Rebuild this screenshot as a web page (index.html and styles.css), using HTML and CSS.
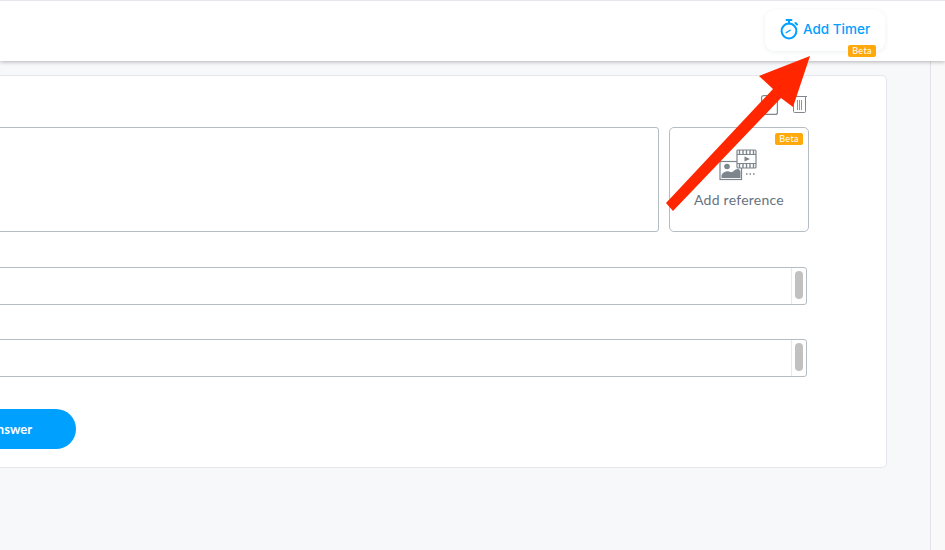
FILE: index.html
```html
<!DOCTYPE html>
<html lang="en">
<head>
<meta charset="utf-8">
<title>Add Timer</title>
<link rel="stylesheet" href="styles.css">
</head>
<body>
<div class="page">
  <header class="topbar">
    <button class="timer-btn" type="button">
      <svg class="timer-icon" width="19" height="22" viewBox="0 0 19 22" fill="none" stroke="#00a0ff" stroke-width="2" stroke-linecap="round">
        <circle cx="9" cy="13" r="7.400"/>
        <path d="M6.500 2h5M9 2v3.500M15.500 5l1.500 1.500" />
        <path d="M6.200 14.600l4-2.400" stroke-width="1.300"/>
      </svg>
      <span class="timer-label">Add Timer</span>
      <span class="badge badge-timer">Beta</span>
    </button>
  </header>
  <div class="body-row">
    <main class="content">
      <section class="card">
        <div class="tools">
          <svg width="17" height="20" viewBox="0 0 17 20" fill="none" stroke="#7f8790" stroke-width="1.200"><rect x="0.600" y="0.600" width="15.800" height="18.800" rx="2"/></svg>
          <svg width="15" height="18" viewBox="0 0 15 18" fill="none" stroke="#7f8790" stroke-width="1"><path d="M0 1.500h15M1.500 2v14.500a1 1 0 0 0 1 1h10a1 1 0 0 0 1-1V2"/><path d="M5.500 5v10M7.500 5v10M9.500 5v10" stroke="#8f969d"/></svg>
        </div>
        <div class="question-row">
          <div class="question-box"></div>
          <div class="reference">
            <span class="badge badge-ref">Beta</span>
            <svg class="ref-icon" width="38" height="32" viewBox="0 0 38 32" fill="none" stroke="#7d858d">
              <rect x="1" y="12.500" width="21.500" height="18" fill="#fff" stroke-width="1.200"/>
              <circle cx="8" cy="17.500" r="2.800" fill="#7d858d" stroke="none"/>
              <path d="M2.500 29v-3c2-3.500 6-4.500 9-3 2.500 1 4-3 7-3 2 0 3 2 3 3v6z" fill="#7d858d" stroke="none"/>
              <rect x="18" y="1" width="19" height="18" rx="1" fill="#fff" stroke-width="1.200"/>
              <path d="M18 5.500h19M18 14.500h19" stroke-width="1.200"/>
              <path d="M20.500 1v4.500M24 1v4.500M27.500 1v4.500M31 1v4.500M34.500 1v4.500M20.500 14.500V19M24 14.500V19M27.500 14.500V19M31 14.500V19M34.500 14.500V19" stroke-width="1.400"/>
              <path d="M25.500 7.500l5.500 2.500-5.500 2.500z" fill="#7d858d" stroke="none"/>
              <path d="M27 25h1.500M30.500 25H32M34 25h1.500" stroke-width="1.500"/>
            </svg>
            <span class="ref-label">Add reference</span>
          </div>
        </div>
        <div class="answer-box"><div class="answer-field"></div><div class="scroll"><div class="thumb"></div></div></div>
        <div class="answer-box"><div class="answer-field"></div><div class="scroll"><div class="thumb"></div></div></div>
        <button class="add-answer" type="button">Add Answer</button>
      </section>
    </main>
    <aside class="side-strip"></aside>
  </div>
  <svg class="arrow" width="945" height="550" viewBox="0 0 945 550">
    <polygon fill="#ff2600" points="810,56 759,76 773,89 666,203 673,211 781,98 793,107"/>
  </svg>
</div>
</body>
</html>
```
FILE: styles.css
```css
* { box-sizing: border-box; }
html, body { margin: 0; padding: 0; }
body { font-family: "Lato", "Open Sans", sans-serif; background: #f7f8fa; }
.page { position: relative; width: 945px; height: 550px; overflow: hidden; display: flex; flex-direction: column; }
.topbar {
  position: relative; z-index: 2; height: 61px; flex: none; background: #fff;
  border-top: 1px solid #e4e7ec; box-shadow: 0 1px 4px rgba(0,0,0,.28);
  display: flex; justify-content: flex-end; align-items: flex-start; padding: 9px 60px 0 0;
}
.timer-btn {
  position: relative; width: 120px; height: 41px; border: 0; border-radius: 9px; background: #fff;
  box-shadow: 0 1px 5px rgba(30,50,80,.08); display: flex; align-items: center; gap: 4px;
  padding: 0 0 2px 15px; color: #00a0ff; font: 500 13.500px "Inter", sans-serif; cursor: pointer;
}
.timer-icon { flex: none; margin-bottom: 1px; }
.timer-label { margin-bottom: 2px; }
.badge { position: absolute; background: #ffa90a; color: #fff; font: 400 9px/12px "Lato", sans-serif; text-align: center; border-radius: 2px; letter-spacing: .3px; }
.badge-timer { left: 83px; top: 35px; width: 28px; height: 12px; }
.badge-ref { right: 5px; top: 5px; width: 28px; height: 12px; }
.body-row { flex: 1; display: flex; min-height: 0; }
.content { flex: 1; min-width: 0; padding: 14px 43px 0 0; }
.side-strip { width: 15px; flex: none; background: #f9f9f9; border-left: 1px solid #e2e3e6; }
.card {
  margin-left: -100px; height: 393px; background: #fff; border: 1px solid #e4e7ec; border-radius: 5px;
  padding: 19px 77px 0 0; display: flex; flex-direction: column;
}
.tools { height: 32px; display: flex; justify-content: flex-end; align-items: flex-start; gap: 14px; padding-right: 2px; }
.question-row { display: flex; gap: 10px; height: 105px; margin-bottom: 35px; }
.question-box { flex: 1; border: 1px solid #b4bcc4; border-radius: 3px; }
.reference {
  position: relative; width: 140px; flex: none; border: 1px solid #b4bcc4; border-radius: 5px;
  display: flex; flex-direction: column; align-items: center; padding-top: 21px;
}
.ref-icon { margin-left: -3px; }
.ref-label { margin-top: 10px; font-size: 14px; line-height: 18px; color: #66737f; letter-spacing: .25px; }
.answer-box {
  height: 38px; margin: 0 2px 34px 0; display: flex; border: 1px solid #b4bcc4; border-radius: 3px; flex: none;
}
.answer-field { flex: 1; }
.scroll { width: 15px; flex: none; border-left: 1px solid #e8e8e8; padding: 3px 0 0 3px; }
.thumb { width: 8px; height: 28px; border-radius: 4px; background: #c1c1c1; }
.add-answer {
  align-self: flex-start; height: 40px; margin-top: -2px; width: 175px; border: 0; border-radius: 20px;
  background: #00a0ff; color: #fff; font: 700 13px "Lato", sans-serif; text-align: right; padding: 0 44px 0 0;
}
.arrow { position: absolute; left: 0; top: 0; z-index: 3; pointer-events: none; }
```
